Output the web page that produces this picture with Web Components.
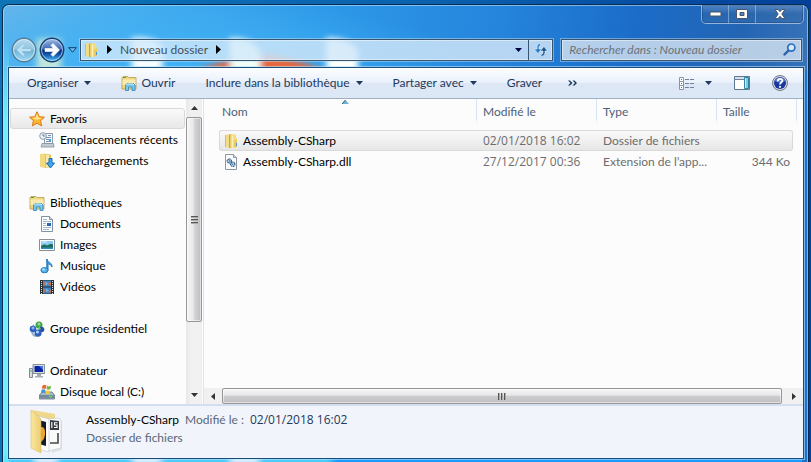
<!DOCTYPE html>
<html lang="fr">
<head>
<meta charset="utf-8">
<title>Nouveau dossier</title>
<style>
html, body { margin: 0; height: 100%; }
body { font: 12px/16px Lato, "Open Sans", sans-serif; color: #000; overflow: hidden; background: linear-gradient(90deg, #0d74b5, #0b62b0 50%, #04409a); }
</style>
</head>
<body>
<explorer-window>
  <window-buttons slot="title"></window-buttons>
  <address-bar slot="address"></address-bar>
  <command-bar slot="toolbar"></command-bar>
  <nav-pane slot="nav">
    <nav-item icon="star" selected>Favoris</nav-item>
    <nav-item icon="recent" child>Emplacements récents</nav-item>
    <nav-item icon="download" child>Téléchargements</nav-item>
    <nav-item icon="library" group>Bibliothèques</nav-item>
    <nav-item icon="doc" child>Documents</nav-item>
    <nav-item icon="image" child>Images</nav-item>
    <nav-item icon="music" child>Musique</nav-item>
    <nav-item icon="video" child>Vidéos</nav-item>
    <nav-item icon="homegroup" group>Groupe résidentiel</nav-item>
    <nav-item icon="computer" group>Ordinateur</nav-item>
    <nav-item icon="disk" child>Disque local (C:)</nav-item>
  </nav-pane>
  <file-list slot="files"></file-list>
  <details-pane slot="details"></details-pane>
</explorer-window>
<script>
const ICONS = {
  caret: [7, 4, '<path d="M0 0h7L3.500 4z" fill="currentColor"/>'],
  crumb: [5, 9, '<path d="M0 0v9l5-4.500z" fill="#000"/>'],
  folder: [16, 16, '<path d="M2 2l4-1v14l-4-1z" fill="#f3dc85"/><path d="M2 2h1v12H2z" fill="#e0bc52"/><path d="M6 1h3v14H6z" fill="#e9cc6c"/><path d="M6 2h1v13H6z" fill="#c9a43c"/><path d="M8 2l4-1 1 1v3h1v9l-6 1z" fill="#f3dc85"/><path d="M9 3l1-.500v12l-1 .300z" fill="#fbf0b6"/><path d="M11 8l3-2v8l-3 .500z" fill="#e8ca62"/><path d="M13 10h1v3h-1z" fill="#4695d5"/>'],
  library: [16, 16, '<path d="M1 14V2.500l1-1h5l1 1h7V14z" fill="#f0d883" stroke="#b5913a" stroke-width=".7"/><path d="M1.500 4.500h13V10h-13z" fill="#f9ebae"/><path d="M2 2h3v1H2z" fill="#45ae49"/><path d="M4.500 15.500V10l1.500-1.500h6.500L14 10v5.500h-3V12H7.500v3.500z" fill="#76c8ed" stroke="#3683b5" stroke-width=".8"/><path d="M5.500 10l1-1h5.500l1 1" fill="none" stroke="#d4f2ff"/>'],
  star: [16, 16, '<path d="M8 .7l2.200 5 5.200.5-3.900 3.500 1.200 5.200L8 12.200l-4.700 2.700 1.200-5.200L.6 6.200l5.200-.5z" fill="#fdb72d" stroke="#db7618"/><path d="M8 2.500l1.500 4 3.800.4L8 9 2.700 6.900l3.800-.4z" fill="#ffe58a"/>'],
  recent: [16, 16, '<path d="M5.500 1.500h8v10h-8z" fill="#f3f6fa" stroke="#8c99a8"/><path d="M9 3.500h3M7 5.500h5M7 7.500h3M7 9.500h3" stroke="#7794b1"/><path d="M10 7h2v3h-2z" fill="#509ed6"/><path d="M3 11.500h11.500l.5 3.500H2z" fill="#c3cad1" stroke="#8a9198" stroke-width=".8"/><circle cx="4" cy="4" r="3.300" fill="#edf3f9" stroke="#8c9aac"/><path d="M4 2v2h2" fill="none" stroke="#456583" stroke-width=".8"/>'],
  download: [16, 16, '<path d="M1 1l5-.5V15l-5-1z" fill="#f3d981"/><path d="M6 1h4l2 1v12l-6 1z" fill="#e5c35b"/><path d="M7 2l3-.5v12l-3 1z" fill="#f9eaa8"/><path d="M10 5.500h3V10h2.500l-4 5-4-5H10z" fill="#42a9ee" stroke="#176bb0"/>'],
  doc: [16, 16, '<path d="M2.500.5h8l3 3v12h-11z" fill="#fcfdff" stroke="#8290a0"/><path d="M10.500.5v3h3" fill="#d3dce6" stroke="#8290a0"/><path d="M4 3.500h4M4 5.500h8M4 7.500h3M4 9.500h3M4 11.500h8M4 13.500h6" stroke="#a5b9cd"/><path d="M8 7h4v3H8z" fill="#2b66b0"/>'],
  image: [16, 16, '<path d="M.5 2.500h15v11H.5z" fill="#fff" stroke="#87909a"/><path d="M2 4h12v8H2z" fill="#8acaf0"/><path d="M2 9c3-2 4-2 6-.5 2-1 4-2 6-1V12H2z" fill="#1e6c59"/><path d="M2 10.500h12V12H2z" fill="#268fc0"/><path d="M3 5h5" stroke="#e1f5ff"/>'],
  music: [16, 16, '<path d="M7.500 1c1 3.500 5.500 3 5.500 8-1-2-2.500-3-4-3.300V12" fill="#55b5ea" stroke="#1c77b8"/><path d="M8 1v11" stroke="#2477bc" stroke-width="1.500"/><ellipse cx="5.500" cy="12.200" rx="3.600" ry="2.600" fill="#52b2ea" stroke="#2379bc"/><ellipse cx="4.500" cy="11.500" rx="1.500" ry=".9" fill="#b4e6ff"/>'],
  video: [16, 16, '<path d="M1 1h14v14H1z" fill="#2b3034"/><path d="M4 1.500h8v6H4zM4 8.500h8v6H4z" fill="#3c83c3"/><path d="M4 2l4 2 4-1v4l-4-2-4 2zM4 9l3 2-2 3H4zM12 10l-3 3 3 1z" fill="#bb7259"/><path d="M6 3l3 1-2 3zM7 9l3 3-3 1z" fill="#68b7ed"/><path d="M2.500 2v13M13.500 2v13" stroke="#d9e2e5" stroke-width="1" stroke-dasharray="1 1"/>'],
  homegroup: [16, 16, '<circle cx="10" cy="4" r="3.500" fill="#3fa548"/><path d="M3 11a5 5 0 0 0 9 2M5 4a5 5 0 0 0-2 5" fill="none" stroke="#97b6c9" stroke-width="2"/><circle cx="10" cy="3" r="1.500" fill="#9ad997"/><circle cx="4" cy="8" r="3.300" fill="#2b62be"/><circle cx="4" cy="7" r="1.500" fill="#88b5ee"/><circle cx="12.500" cy="8.500" r="2.800" fill="#2551a7"/><circle cx="9" cy="12" r="3.500" fill="#315fba"/><circle cx="8.500" cy="11" r="1.600" fill="#a6cdf4"/><path d="M10 5l2 3-3 1z" fill="#74ca6e"/>'],
  computer: [16, 16, '<path d="M.5 5.500h3v9h-3z" fill="#d8dce0" stroke="#828a92"/><path d="M4 1.500h11.500v9H4z" fill="#d8dde2" stroke="#868e97"/><path d="M5.500 3h8.500v6H5.500z" fill="#0b22a5"/><path d="M10 3h4v4z" fill="#4678df"/><path d="M8 11h4v2h2v1.500H6V13h2z" fill="#a5adb5"/><path d="M1 8h2" stroke="#3cbd43"/>'],
  disk: [16, 16, '<path d="M3 8h10l2.500 3v4H.5v-4z" fill="#a8b9c7" stroke="#637482" stroke-width=".8"/><path d="M1 11h14v3.500H1z" fill="#758b9b"/><path d="M10 12.500h3" stroke="#49e95d" stroke-width="1.500"/><path d="M3.500 1.500q2-1.500 4 0L6.800 5q-2-1-4 0z" fill="#ea6830"/><path d="M8.200 1.800q2 1 4 0L11.500 5q-2 1.200-4 .3z" fill="#74b944"/><path d="M2.500 6q2-1.500 4 0L6 9q-2-1-4 0z" fill="#3b94dc"/><path d="M7.200 6.300q2 1 4 0L10.500 9.500q-2 1-4 .2z" fill="#f6c737"/>'],
  dll: [16, 16, '<path d="M2.500.5h8l3 3v12h-11z" fill="#fbfcfe" stroke="#8b97a3"/><path d="M10.500.5v3h3" fill="#d8dfe6" stroke="#8b97a3"/><circle cx="6.300" cy="7" r="2" fill="#d4e8f8" stroke="#315f8e" stroke-width="1.400" stroke-dasharray="1.200 .5"/><circle cx="9.800" cy="10.300" r="2.100" fill="#d4e8f8" stroke="#315f8e" stroke-width="1.400" stroke-dasharray="1.200 .5"/><circle cx="6.300" cy="7" r=".7" fill="#315f8e"/><circle cx="9.800" cy="10.300" r=".7" fill="#315f8e"/>'],
  views: [16, 13, '<path d="M.5.500h4v12h-4zM.5 4.500h4M.5 8.500h4" fill="#fff" stroke="#8b94a3"/><path d="M2 2h1v1H2zM2 10h1v1H2z" fill="#4a6fa5"/><path d="M2 6h1v1H2z" fill="#e22626"/><path d="M6 2.500h4M11 2.500h4M6 6.500h4M11 6.500h4M6 10.500h4M11 10.500h4" stroke="#71819a"/>'],
  preview: [16, 14, '<path d="M.5.500h15v13H.5z" fill="#fff" stroke="#5d7891"/><path d="M1 1h14v2H1z" fill="#d5dfe9"/><path d="M1 3.500h9" stroke="#6b829a"/><path d="M10.500 1.500h4v11h-4z" fill="#78c9e3" stroke="#34819f"/><path d="M11.500 2v10" stroke="#c5f1fc"/>'],
  help: [16, 16, '<circle cx="8" cy="8" r="7.500" fill="#d2d5dc" stroke="#777c87"/><circle cx="8" cy="8" r="6" fill="#17389f"/><path d="M3 6a5.300 5.300 0 0 1 10 0q-5 3-10 0z" fill="#5d86d9"/><path d="M5.800 6.200C6 3 10.700 3.300 10.300 6 10 7.600 8 7.600 8 9.500" fill="none" stroke="#fff" stroke-width="1.800"/><circle cx="8" cy="11.800" r="1.100" fill="#fff"/>'],
  chevrons: [9, 6, '<path d="M0 .500h2L4.500 3 2 5.500H0L2.500 3zM4.500.500h2L9 3 6.500 5.500h-2L7 3z" fill="currentColor"/>'],
  magnifier: [13, 13, '<path d="M1.500 11.500l4-4" stroke="#2460a8" stroke-width="2.400" stroke-linecap="round"/><circle cx="8.300" cy="4.600" r="3.600" fill="#d7e9fa" stroke="#2c70bf" stroke-width="1.700"/>'],
  refresh: [15, 14, '<path d="M7 .5Q4 .5 4 4v2H1l4 4.500L9 6H6V4.500Q6 2.500 8 2.500z" fill="#2b82cb" stroke="#eaf5ff" stroke-width=".6"/><path d="M8 13.500q4 0 4-4V8h2.500L11 3.500 7 8h3v1.500q0 2-2 2z" fill="#175795" stroke="#eaf5ff" stroke-width=".6"/>'],
  back: [26, 26, '<defs><linearGradient id="b" x2="0" y2="1"><stop stop-color="#b9dcee"/><stop offset=".5" stop-color="#8cc3e0"/><stop offset=".52" stop-color="#6eb2d7"/><stop offset="1" stop-color="#a4dcf5"/></linearGradient></defs><circle cx="13" cy="13" r="11.700" fill="url(#b)" stroke="#577f99" stroke-width="1.400"/><circle cx="13" cy="13" r="10.500" fill="none" stroke="#d2edfa" stroke-opacity=".8"/><path d="M5.500 13l6.500-6.500 2 2-3 3h9v3h-9l3 3-2 2z" fill="#bce2f6" stroke="#86b5d0" stroke-width=".6"/>'],
  forward: [26, 26, '<defs><linearGradient id="f" x2="0" y2="1"><stop stop-color="#a6bfe6"/><stop offset=".47" stop-color="#3c67b4"/><stop offset=".5" stop-color="#092a78"/><stop offset=".7" stop-color="#1258ae"/><stop offset="1" stop-color="#54c8fa"/></linearGradient></defs><circle cx="13" cy="13" r="11.700" fill="url(#f)" stroke="#17406f" stroke-width="1.400"/><circle cx="13" cy="13" r="10.500" fill="none" stroke="#c8e4ff" stroke-opacity=".7"/><path d="M20.500 13L14 6.500l-2 2 2.500 3H6v3h8.500l-2.500 3 2 2z" fill="#fff" stroke="#fff" stroke-width=".6"/>'],
  recentpages: [9, 6, '<path d="M.7.700h7.600L4.500 5.200z" fill="#6eb9ea" stroke="#0d3d72"/>'],
  minimize: [13, 6, '<path d="M1 1h11v4H1z" fill="#fff" stroke="#4c5467"/>'],
  maximize: [12, 10, '<path d="M.5.500h11v9H.5z" fill="#fff" stroke="#4c5467"/><path d="M4 3.500h4v3H4z" fill="#4685c5" stroke="#4c5467"/>'],
  close: [12, 10, '<path d="M1 .5h3l2 2.200L8 .5h3L7.800 5 11 9.500H8L6 7.300 4 9.500H1L4.200 5z" fill="#fff" stroke="#4c5467"/>'],
  up: [7, 4, '<path d="M3.500 0L7 4H0z" fill="#333"/>'],
  down: [7, 4, '<path d="M0 0h7L3.500 4z" fill="#333"/>'],
  left: [4, 7, '<path d="M4 0v7L0 3.500z" fill="#333"/>'],
  right: [4, 7, '<path d="M0 0v7l4-3.500z" fill="#333"/>'],
  sort: [7, 4, '<path d="M3.500 0L7 4H0z" fill="#6db2d2"/><path d="M0 4L3.500 0" stroke="#315a76"/>'],
  openfolder: [36, 46, '<defs><linearGradient id="o"><stop stop-color="#fae79c"/><stop offset="1" stop-color="#eccd74"/></linearGradient></defs><path d="M2 1l23 4v6H9z" fill="#f0d88a"/><path d="M22 10l10 2v29l-10 3z" fill="#e2e4e7"/><path d="M18 10l11-1 2 2v28l-13 3z" fill="#fafafb" stroke="#c3c6ca" stroke-width=".6"/><path d="M20 11l9 1v9h-9z" fill="#383b3f"/><path d="M21.800 13v6M27.500 13.700h-3V16h2.500v2.500h-3" fill="none" stroke="#fff" stroke-width="1.100"/><path d="M20 34h8V24" fill="none" stroke="#45484b" stroke-width="1.600"/><path d="M8 7l11 3v33l-11-3z" fill="#fdfdfd" stroke="#c3c6ca" stroke-width=".6"/><path d="M9 11l7 2v24l-7-2z" fill="#141b2c"/><path d="M9 19q5-3 6 3 1 9-6 12v-4q3-3 2-6l-2-1z" fill="#f0a52d"/><path d="M9 21q3 4 1 8H9z" fill="#3c8ad0"/><path d="M1 1l10 9v34L1 39z" fill="url(#o)" stroke="#dcbd62" stroke-width=".6"/>']
};
const define = (name, html, setup) => {
  const template = document.createElement('template');
  template.innerHTML = html;
  customElements.define(name, class extends HTMLElement {
    constructor() {
      super();
      this.attachShadow({ mode: 'open' }).append(template.content.cloneNode(true));
    }
    connectedCallback() { if (setup) setup(this, this.shadowRoot); }
  });
};
const RESET = '*{box-sizing:border-box}button{font:inherit;color:inherit;background:none;border:0;padding:0;margin:0;display:flex;flex:none;align-items:center;justify-content:center;white-space:nowrap}';

define('win-icon', '<style>:host{display:inline-flex;flex:none}svg{display:block}</style><span></span>', (el, root) => {
  const [w, h, body] = ICONS[el.getAttribute('name')];
  root.querySelector('span').innerHTML = `<svg width="${w}" height="${h}" viewBox="0 0 ${w} ${h}" aria-hidden="true">${body}</svg>`;
});

define('glass-backdrop', `<style>
:host{display:block;overflow:hidden;background:
 radial-gradient(ellipse 300px 60px at 20% 12%,#41b2f5 0,transparent 100%),
 linear-gradient(100deg,#63b5ea 0,#45adef 15%,#2e9ae9 36%,#2585dc 56%,#1b6cc8 72%,#2465b4 84%,#4b80ba 100%)}
svg{display:block;width:100%;height:100%}
</style><svg viewBox="0 0 807 458" preserveAspectRatio="none" aria-hidden="true">
<defs><filter id="s" x="-50%" y="-50%" width="200%" height="200%"><feGaussianBlur stdDeviation="3"/></filter>
<linearGradient id="l" x2="0" y2="1"><stop stop-color="#74ebfa" stop-opacity="0"/><stop offset=".2" stop-color="#74ebfa"/></linearGradient></defs>
<path d="M0 430h807v28H0z" fill="#199bff"/><path d="M0 30h6v428H0z" fill="url(#l)"/><path d="M801 66h6v392h-6z" fill="#1c71cd"/>
<g filter="url(#s)"><path d="M0 452h330v8H0z" fill="#56dcff"/>
<path d="M188 70q40-20 75-20 35 3 65 20z" fill="#e8683c"/>
<path d="M34 34h24v36H34z" fill="#dff2d5" opacity=".8"/><path d="M129 33q24-2 31 10v27h-31z" fill="#f4fdff"/><path d="M227 33q24 0 31 14v23h-30z" fill="#f0fff5"/><path d="M324 33q26 0 32 14v23h-32z" fill="#fbfffb"/>
<path d="M32 450h22v10H32zM130 450h28v10h-28zM228 450h28v10h-28z" fill="#fff"/></g></svg>`);

define('explorer-window', `<style>${RESET}
:host{display:block;height:100%;padding:4px 2px 0;box-sizing:border-box}
.frame{position:relative;height:100%;display:grid;grid-template-rows:auto auto minmax(0,1fr);border:1px solid #0a2c50;border-bottom:0;border-radius:7px 7px 0 0;overflow:hidden;padding:0 4px 3px 5px}
glass-backdrop{position:absolute;inset:0}
.rim{position:absolute;inset:0;border:1px solid #b9e3fa99;border-bottom:0;border-radius:6px 6px 0 0}
.row{position:relative}
.client{position:relative;display:grid;grid-template-rows:auto minmax(0,1fr) auto;background:#fcfcfc;border:1px solid #1b4c78;box-shadow:0 0 0 1px #b9e3fa99}
.body{display:grid;grid-template-columns:195px minmax(0,1fr);min-height:0}
</style><div class="frame"><glass-backdrop></glass-backdrop><div class="rim"></div>
<header class="row"><slot name="title"></slot></header><div class="row"><slot name="address"></slot></div>
<main class="client"><slot name="toolbar"></slot><div class="body"><slot name="nav"></slot><slot name="files"></slot></div><slot name="details"></slot></main></div>`);

define('window-buttons', `<style>${RESET}
:host{display:flex;justify-content:flex-end}
div{display:flex;height:19px;border:1px solid #c1d8ee99;border-top:0;border-radius:0 0 5px 5px;background:linear-gradient(#7c9fcb88,#34659f55 50%,#3b70ab55);box-shadow:inset 0 0 0 1px #183b6d66}
button{width:27px;border-right:1px solid #b3cde888}button:last-child{width:47px;border:0}
</style><div><button aria-label="Réduire"><win-icon name="minimize"></win-icon></button><button aria-label="Agrandir"><win-icon name="maximize"></win-icon></button><button aria-label="Fermer"><win-icon name="close"></win-icon></button></div>`);

define('address-bar', `<style>${RESET}
:host{box-sizing:border-box;display:flex;align-items:center;height:43px;padding:9px 2px 1px 3px}
.forward{margin-left:2px}
.recent{width:15px;height:24px}
.field{display:flex;align-items:center;height:22px;border:1px solid #39546e;box-shadow:0 0 0 1px #c2e4f777,inset 0 0 0 1px #ffffff77}
.path{flex:1 1 474px;min-width:0;padding-left:2px;color:#444f5a;background:linear-gradient(90deg,#d3ebfcc8,#d0e4f7d9)}
.path a{color:inherit;text-decoration:none;padding:0 8px;white-space:nowrap}
.path .first{margin-left:8px}
.drop{margin-left:auto;width:20px;height:20px;color:#000046}
.refresh{width:24px;height:20px;border-left:1px solid #39546e}
.search{flex:0 1 241px;min-width:0;margin-left:8px;padding:0 5px 0 7px;background:#d7e4f2d0}
input{flex:1;min-width:0;border:0;padding:0;background:none;font:inherit;font-style:italic;outline:0}
input::placeholder{color:#6d7278;opacity:1}
</style><button aria-label="Précédent"><win-icon name="back"></win-icon></button><button class="forward" aria-label="Suivant"><win-icon name="forward"></win-icon></button><button class="recent" aria-label="Pages récentes"><win-icon name="recentpages"></win-icon></button>
<div class="field path"><win-icon name="folder"></win-icon><win-icon class="first" name="crumb"></win-icon><a href="#">Nouveau dossier</a><win-icon name="crumb"></win-icon><button class="drop" aria-label="Emplacements précédents"><win-icon name="caret"></win-icon></button><button class="refresh" aria-label="Actualiser"><win-icon name="refresh"></win-icon></button></div>
<div class="field search"><input type="text" aria-label="Rechercher" placeholder="Rechercher dans : Nouveau dossier"><win-icon name="magnifier"></win-icon></div>`);

define('command-bar', `<style>${RESET}
:host{box-sizing:border-box;display:flex;align-items:center;height:31px;padding:0 15px 0 18px;color:#1e395b;background:linear-gradient(#fcfdff,#eaf1fb 48%,#dce6f4 52%,#dde8f6);border-bottom:1px solid #a0afc3;box-shadow:inset 0 1px #fff}
button{height:24px;gap:6px}.open{gap:4px}.l{display:flex;gap:30px}.r{display:flex;margin-left:auto;gap:22px}.more{margin-left:-4px}.v{gap:10px}
</style><div class="l"><button>Organiser <win-icon name="caret"></win-icon></button><button class="open"><win-icon name="library"></win-icon>Ouvrir</button><button>Inclure dans la bibliothèque <win-icon name="caret"></win-icon></button><button>Partager avec <win-icon name="caret"></win-icon></button><button>Graver</button><button class="more" aria-label="Autres commandes"><win-icon name="chevrons"></win-icon></button></div>
<div class="r"><button class="v" aria-label="Affichage"><win-icon name="views"></win-icon><win-icon name="caret"></win-icon></button><button aria-label="Volet de visualisation"><win-icon name="preview"></win-icon></button><button aria-label="Aide"><win-icon name="help"></win-icon></button></div>`);

define('nav-item', `<style>
:host{display:block}:host([group]){margin-top:21px}
a{box-sizing:border-box;display:flex;align-items:center;gap:5px;height:21px;padding-left:18px;border:1px solid transparent;border-radius:3px;color:#000;text-decoration:none;white-space:nowrap}
:host([child]) a{padding-left:28px}
:host([selected]) a{border-color:#d9d9d9;background:linear-gradient(#fafafa,#e8e8e8)}
</style><a href="#"><slot></slot></a>`, (el, root) => {
  const icon = document.createElement('win-icon');
  icon.setAttribute('name', el.getAttribute('icon'));
  root.querySelector('a').prepend(icon);
});

define('scroll-bar', `<style>${RESET}
:host{display:flex;flex-direction:column;background:linear-gradient(90deg,#e8e8e8,#f1f1f1 30%,#f0f0f0);width:16px}
button{height:18px}
.thumb{flex:1;display:flex;align-items:center;justify-content:center;border:1px solid #979797;border-radius:2px;background:linear-gradient(90deg,#f6f6f6,#e9e9eb 45%,#d6d6d9 50%,#bcbcc0);box-shadow:inset 0 0 0 1px #ffffff88}
.grip{width:7px;height:8px;background:repeating-linear-gradient(#555 0 1px,#aaa 1px 2px,transparent 2px 3px)}
.rest{flex:0 0 var(--rest,0px)}
:host([horizontal]){flex-direction:row;width:auto;height:16px;background:#f0f0f0}
:host([horizontal]) button{width:18px;height:auto}
:host([horizontal]) .thumb{background:linear-gradient(#f6f6f6,#e7e7e9 45%,#cdcdcf 50%,#bfbfc1)}
:host([horizontal]) .grip{width:8px;height:7px;background:repeating-linear-gradient(90deg,#555 0 1px,#aaa 1px 2px,transparent 2px 3px)}
</style><button class="a"></button><div class="thumb"><div class="grip"></div></div><div class="rest"></div><button class="b"></button>`, (el, root) => {
  const flat = el.hasAttribute('horizontal');
  [['.a', flat ? 'left' : 'up'], ['.b', flat ? 'right' : 'down']].forEach(([q, n]) => {
    root.querySelector(q).innerHTML = `<win-icon name="${n}"></win-icon>`;
    root.querySelector(q).setAttribute('aria-label', 'Défiler');
  });
});

define('nav-pane', `<style>
:host{display:flex;min-height:0;min-width:0;border-right:1px solid #d9e3f2;padding-right:1px}
nav{flex:1;min-width:0;overflow:hidden;padding:9px 1px 0 1px}
scroll-bar{--rest:64px}
</style><nav><slot></slot></nav><scroll-bar></scroll-bar>`);

define('file-list', `<style>${RESET}
:host{display:flex;flex-direction:column;justify-content:space-between;min-width:0;min-height:0}
.area{position:relative;padding:0 6px 0 15px}
.sort{position:absolute;left:138px;top:1px;display:flex}
table{width:100%;table-layout:fixed;border-collapse:separate;border-spacing:0}
.w{width:120px}.s{width:76px}.e{width:4px}
th{height:31px;padding:2px 0 8px 6px;text-align:left;font-weight:400;color:#4c607a;border-right:1px solid;border-image:linear-gradient(#d5e5f5 60%,transparent 80%) 1}
th:first-child{padding-left:3px}
td{height:21px;padding:0 4px 0 6px;color:#6d6d6d;white-space:nowrap;overflow:hidden;border:1px solid transparent;border-width:1px 0}
td:last-child{padding:0;border:0;background:none!important}
td:first-child{color:#000;padding-left:3px;border-left-width:1px;border-radius:3px 0 0 3px}
td:nth-child(2){font-family:"Open Sans",sans-serif}
td:nth-child(4){text-align:right;padding-right:2px;border-right-width:1px;border-radius:0 3px 3px 0}
td div{display:flex;align-items:center;gap:4px}
tr.on td{background:linear-gradient(#fafafa,#e6e6e6);border-color:#d9d9d9}
scroll-bar{--rest:3px}
</style><div class="area"><span class="sort"><win-icon name="sort"></win-icon></span><table><colgroup><col><col class="w"><col class="w"><col class="s"><col class="e"></colgroup>
<thead><tr><th>Nom</th><th>Modifié le</th><th>Type</th><th colspan="2">Taille</th></tr></thead>
<tbody><tr class="on"><td><div><win-icon name="folder"></win-icon>Assembly-CSharp</div></td><td>02/01/2018 16:02</td><td>Dossier de fichiers</td><td></td><td></td></tr>
<tr><td><div><win-icon name="dll"></win-icon>Assembly-CSharp.dll</div></td><td>27/12/2017 00:36</td><td>Extension de l’app...</td><td>344 Ko</td><td></td></tr></tbody></table></div><scroll-bar horizontal></scroll-bar>`);

define('details-pane', `<style>
:host{display:flex;align-items:center;gap:20px;height:54px;box-sizing:border-box;padding:0 0 0 21px;background:#f1f5fb;border-top:2px solid #d3dff0;color:#5a6779}
div{padding-bottom:4px}
p{margin:0 0 2px;display:flex;gap:6px;align-items:baseline}.n{color:#000}.d{color:#1e395b;font-family:"Open Sans",sans-serif}
</style><win-icon name="openfolder"></win-icon><div><p><span class="n">Assembly-CSharp</span><span>Modifié le :</span><span class="d">02/01/2018 16:02</span></p><p>Dossier de fichiers</p></div>`);
</script>
</body>
</html>
